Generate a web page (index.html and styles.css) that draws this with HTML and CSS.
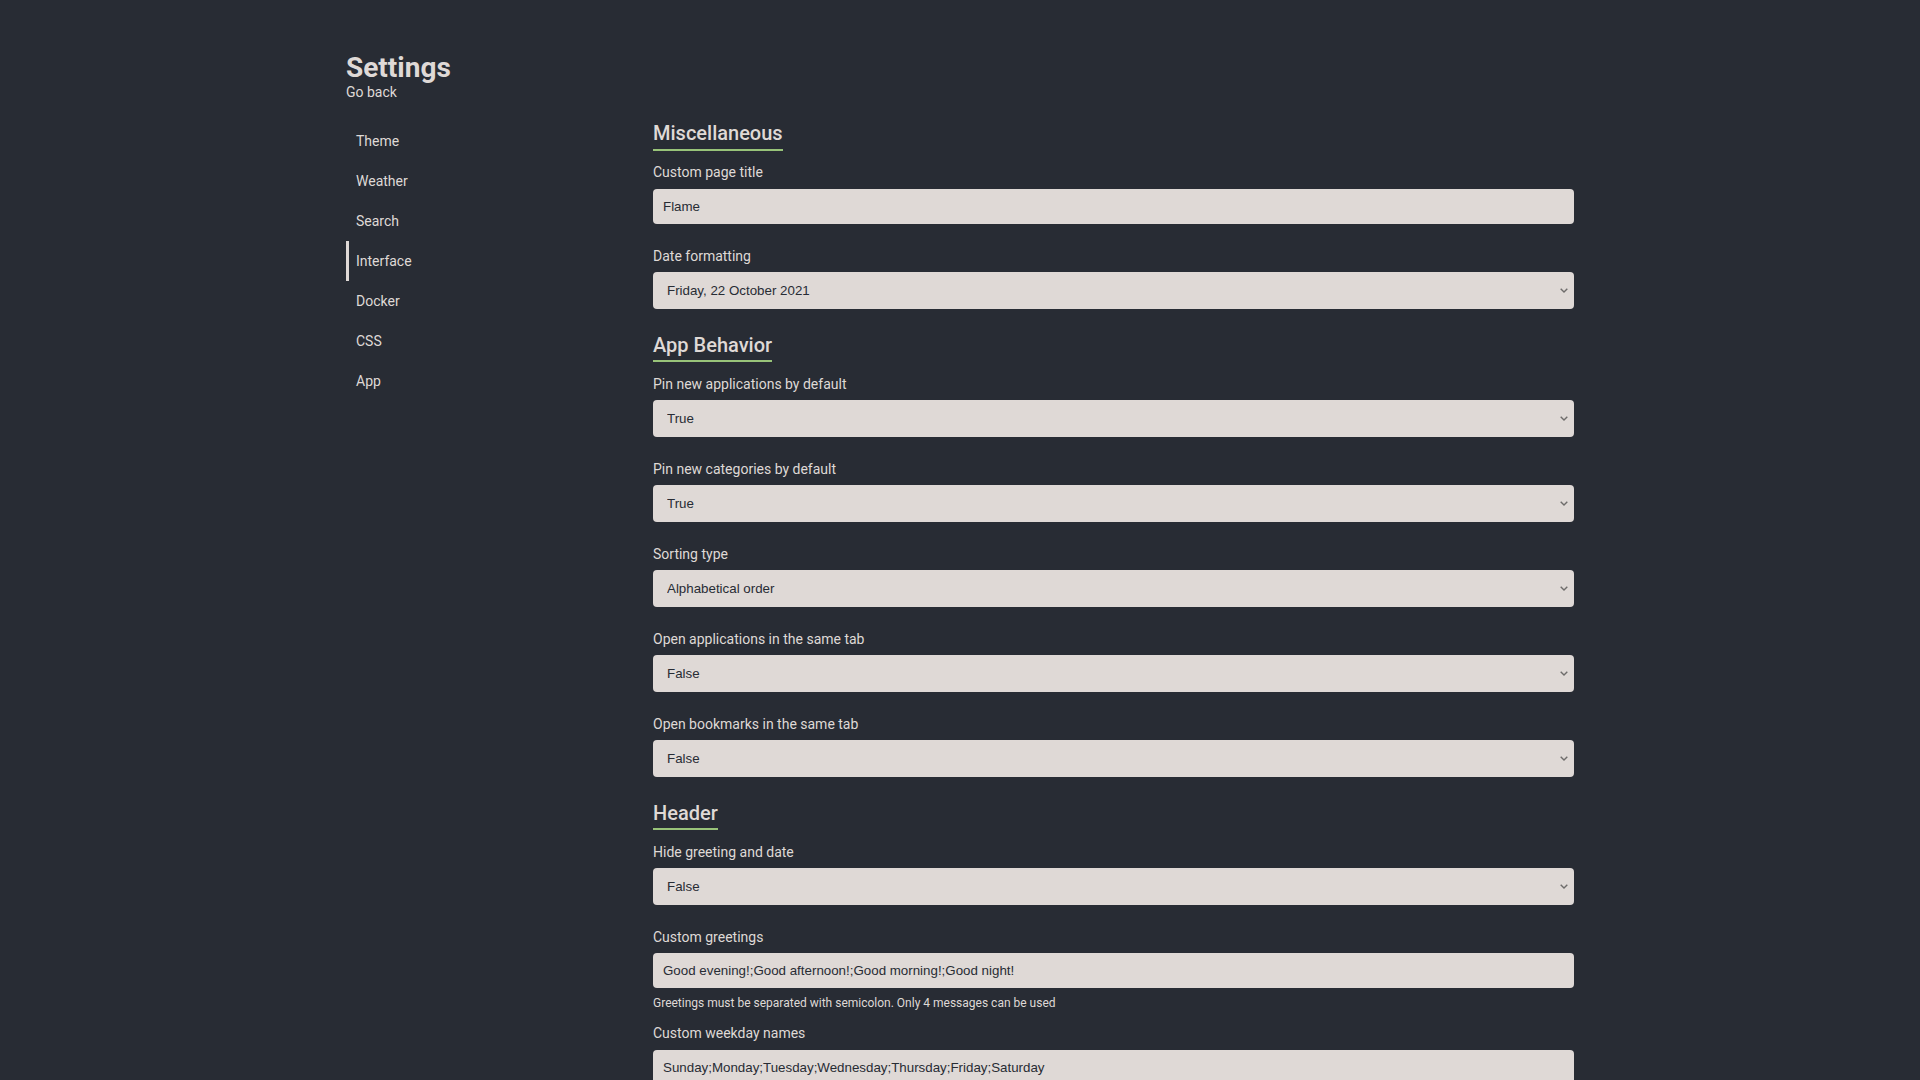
FILE: index.html
```html
<!DOCTYPE html>
<html lang="en">
<head>
<meta charset="utf-8">
<title>Flame</title>
<link rel="stylesheet" href="styles.css">
</head>
<body>
<div class="container">
  <header class="headline">
    <h1 class="headline-title">Settings</h1>
    <a class="headline-sub" href="#">Go back</a>
  </header>
  <div class="settings">
    <nav class="nav">
      <a class="nav-link" href="#">Theme</a>
      <a class="nav-link" href="#">Weather</a>
      <a class="nav-link" href="#">Search</a>
      <a class="nav-link active" href="#">Interface</a>
      <a class="nav-link" href="#">Docker</a>
      <a class="nav-link" href="#">CSS</a>
      <a class="nav-link" href="#">App</a>
    </nav>
    <form class="content">
      <h2 class="section-title">Miscellaneous</h2>
      <div class="group">
        <label>Custom page title</label>
        <input class="field" type="text" value="Flame">
      </div>
      <div class="group">
        <label>Date formatting</label>
        <div class="select-wrap">
          <select class="field select"><option>Friday, 22 October 2021</option></select>
          <svg class="chevron" viewBox="0 0 8 5" width="8" height="5"><path d="M0.7 0.7 L4 4 L7.3 0.7" fill="none" stroke="#6e6c6b" stroke-width="1.4"/></svg>
        </div>
      </div>

      <h2 class="section-title">App Behavior</h2>
      <div class="group">
        <label>Pin new applications by default</label>
        <div class="select-wrap">
          <select class="field select"><option>True</option><option>False</option></select>
          <svg class="chevron" viewBox="0 0 8 5" width="8" height="5"><path d="M0.7 0.7 L4 4 L7.3 0.7" fill="none" stroke="#6e6c6b" stroke-width="1.4"/></svg>
        </div>
      </div>
      <div class="group">
        <label>Pin new categories by default</label>
        <div class="select-wrap">
          <select class="field select"><option>True</option><option>False</option></select>
          <svg class="chevron" viewBox="0 0 8 5" width="8" height="5"><path d="M0.7 0.7 L4 4 L7.3 0.7" fill="none" stroke="#6e6c6b" stroke-width="1.4"/></svg>
        </div>
      </div>
      <div class="group">
        <label>Sorting type</label>
        <div class="select-wrap">
          <select class="field select"><option>Alphabetical order</option><option>Creation date</option></select>
          <svg class="chevron" viewBox="0 0 8 5" width="8" height="5"><path d="M0.7 0.7 L4 4 L7.3 0.7" fill="none" stroke="#6e6c6b" stroke-width="1.4"/></svg>
        </div>
      </div>
      <div class="group">
        <label>Open applications in the same tab</label>
        <div class="select-wrap">
          <select class="field select"><option>False</option><option>True</option></select>
          <svg class="chevron" viewBox="0 0 8 5" width="8" height="5"><path d="M0.7 0.7 L4 4 L7.3 0.7" fill="none" stroke="#6e6c6b" stroke-width="1.4"/></svg>
        </div>
      </div>
      <div class="group">
        <label>Open bookmarks in the same tab</label>
        <div class="select-wrap">
          <select class="field select"><option>False</option><option>True</option></select>
          <svg class="chevron" viewBox="0 0 8 5" width="8" height="5"><path d="M0.7 0.7 L4 4 L7.3 0.7" fill="none" stroke="#6e6c6b" stroke-width="1.4"/></svg>
        </div>
      </div>

      <h2 class="section-title">Header</h2>
      <div class="group">
        <label>Hide greeting and date</label>
        <div class="select-wrap">
          <select class="field select"><option>False</option><option>True</option></select>
          <svg class="chevron" viewBox="0 0 8 5" width="8" height="5"><path d="M0.7 0.7 L4 4 L7.3 0.7" fill="none" stroke="#6e6c6b" stroke-width="1.4"/></svg>
        </div>
      </div>
      <div class="group with-hint">
        <label>Custom greetings</label>
        <input class="field" type="text" value="Good evening!;Good afternoon!;Good morning!;Good night!">
        <span class="hint">Greetings must be separated with semicolon. Only 4 messages can be used</span>
      </div>
      <div class="group">
        <label>Custom weekday names</label>
        <input class="field" type="text" value="Sunday;Monday;Tuesday;Wednesday;Thursday;Friday;Saturday">
      </div>
      <div class="group">
        <label>Custom month names</label>
        <input class="field" type="text" value="January;February;March;April;May;June;July;August;September;October;November;December">
      </div>
    </form>
  </div>
</div>
</body>
</html>
```
FILE: styles.css
```css
html {
  scrollbar-width: none;
}
html::-webkit-scrollbar,
body::-webkit-scrollbar {
  display: none;
}
* {
  box-sizing: border-box;
}
body {
  margin: 0;
  background: #282c34;
  color: #dfd9d6;
  font-family: Roboto, "Liberation Sans", sans-serif;
  font-size: 14px;
}
a {
  color: #dfd9d6;
  text-decoration: none;
}
.container {
  width: 1228px;
  margin: 0 auto;
  padding-top: 51px;
}
.headline {
  margin-bottom: 21px;
}
.headline-title {
  margin: 0;
  font-size: 28px;
  line-height: 33px;
  font-weight: 700;
  color: #dfd9d6;
}
.headline-sub {
  display: block;
  line-height: 16px;
  font-size: 14px;
}
.settings {
  display: grid;
  grid-template-columns: 1fr 3fr;
}
.nav {
  display: flex;
  flex-direction: column;
  align-items: flex-start;
}
.nav-link {
  display: block;
  width: 100%;
  padding: 10px 7px;
  line-height: 20px;
  font-size: 14px;
  border-left: 3px solid transparent;
}
.nav-link.active {
  border-left-color: #dfd9d6;
}
.content {
  display: flex;
  flex-direction: column;
  align-items: flex-start;
}
.section-title {
  margin: 0 0 13.5px;
  font-size: 20px;
  line-height: 24px;
  font-weight: 500;
  padding-bottom: 3.5px;
  border-bottom: 2px solid #98c379;
  color: #dfd9d6;
}
.group {
  width: 100%;
  margin-bottom: 24px;
}
.group.with-hint {
  margin-bottom: 15px;
}
.group label {
  display: block;
  font-size: 14px;
  line-height: 16px;
  margin-bottom: 8.5px;
}
.field {
  display: block;
  width: 100%;
  height: 35px;
  margin: 0;
  border: 0;
  border-radius: 4px;
  padding: 0 10px;
  background: #dfd9d6;
  color: #282c34;
  font-family: "Liberation Sans", Arial, sans-serif;
  font-size: 13.333px;
  outline: none;
}
.select-wrap {
  position: relative;
}
.select {
  height: 36.5px;
  padding-left: 14px;
  appearance: none;
  -webkit-appearance: none;
}
.chevron {
  position: absolute;
  right: 6px;
  top: 16px;
  pointer-events: none;
}
.hint {
  display: block;
  margin-top: 8px;
  font-size: 12px;
  line-height: 14px;
}
```
